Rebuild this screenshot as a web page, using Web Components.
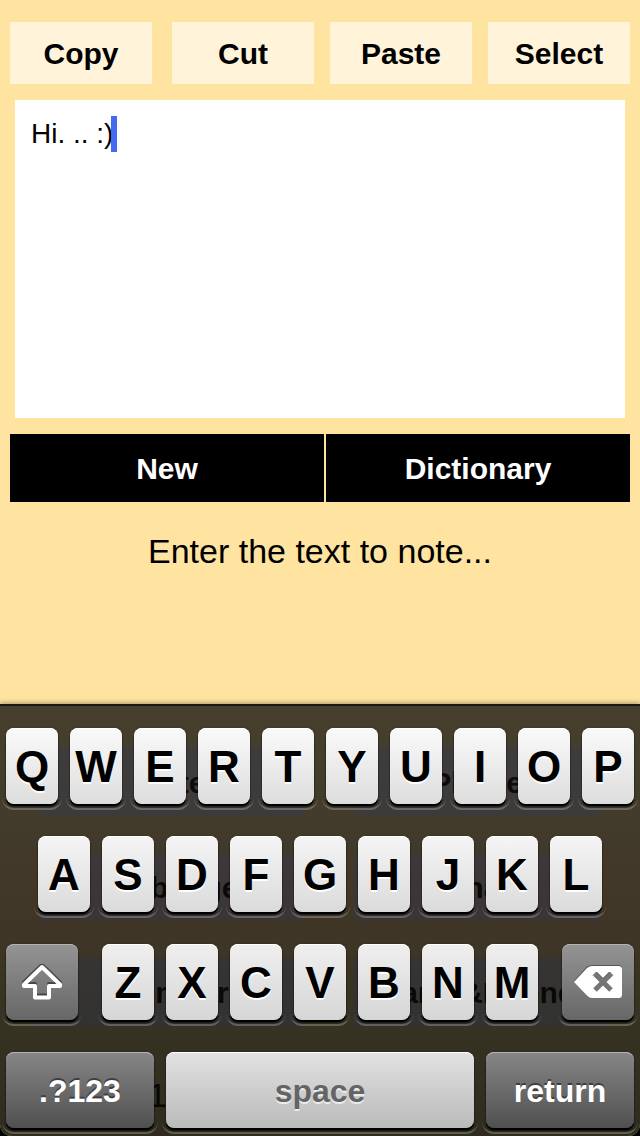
<!DOCTYPE html>
<html lang="en">
<head>
<meta charset="utf-8">
<meta name="viewport" content="width=device-width">
<title>Notes</title>
<style>
  body { margin: 0; background: #000; font-family: "Liberation Sans", Arial, sans-serif; }
</style>
</head>
<body>
<note-app></note-app>

<script>
const define = (name, html) => {
  const template = document.createElement('template');
  template.innerHTML = html;
  customElements.define(name, class extends HTMLElement {
    constructor() {
      super();
      this.attachShadow({ mode: 'open' }).append(template.content.cloneNode(true));
    }
  });
};

/* Flat rectangular button, coloured through custom properties */
define('flat-button', `
  <style>
    :host { display: block; }
    button {
      display: block; width: 100%; height: 100%; margin: 0; padding: 2px 0 0; border: 0;
      background: var(--fill, #fff3da); color: var(--ink, #000);
      font: bold 30px/36px "Liberation Sans", Arial, sans-serif;
    }
  </style>
  <button type="button"><slot></slot></button>`);

define('edit-bar', `
  <style>
    :host { display: grid; grid-template-columns: 1fr 20px 1fr 16px 1fr 16px 1fr; grid-auto-rows: 62px; }
    flat-button:nth-of-type(2) { grid-column: 3; }
    flat-button:nth-of-type(3) { grid-column: 5; }
    flat-button:nth-of-type(4) { grid-column: 7; }
  </style>
  <flat-button>Copy</flat-button>
  <flat-button>Cut</flat-button>
  <flat-button>Paste</flat-button>
  <flat-button>Select</flat-button>`);

define('action-bar', `
  <style>
    :host { display: grid; grid-template-columns: 314fr 304fr; gap: 2px; grid-auto-rows: 68px; }
    flat-button { --fill: #000; --ink: #fff; }
  </style>
  <flat-button>New</flat-button>
  <flat-button>Dictionary</flat-button>`);

define('note-pad', `
  <style>
    :host { display: flex; flex-direction: column; flex: 1; padding: 22px 10px 0; }
    .field { position: relative; margin: 16px 5px; }
    textarea {
      display: block; box-sizing: border-box; width: 100%; height: 318px; margin: 0; padding: 16px;
      border: 0; outline: 0; resize: none; background: #fff; color: #000;
      font: 28px/36px "Liberation Sans", Arial, sans-serif;
    }
    .caret { position: absolute; top: 16px; left: 96px; width: 6px; height: 36px; background: #426bf2; }
    label { padding: 29px 0; text-align: center; font-size: 34px; line-height: 40px; color: #000; }
  </style>
  <edit-bar></edit-bar>
  <div class="field">
    <textarea id="note">Hi. .. :)</textarea>
    <span class="caret"></span>
  </div>
  <action-bar></action-bar>
  <label for="note">Enter the text to note...</label>`);

define('shortcut-grid', `
  <style>
    :host {
      display: grid; grid-template-columns: 264fr 246fr; grid-auto-rows: 68px; gap: 37px 50px;
      align-content: start; padding: 44px 40px 0;
    }
    flat-button { --fill: #e2e2e6; }
    p { margin: 0; padding-left: 108px; font-size: 34px; line-height: 64px; }
  </style>
  <flat-button>Note</flat-button>
  <flat-button>Phone</flat-button>
  <flat-button>Webpage</flat-button>
  <flat-button>Email</flat-button>
  <flat-button>Number</flat-button>
  <flat-button>Name&amp;Phone</flat-button>
  <p>1</p>`);

/* One key: raised face, dark lower edge and a thin lit rim underneath */
define('key-cap', `
  <style>
    :host { display: block; position: relative; isolation: isolate; flex: 1; height: 76px; }
    :host::after {
      content: ""; position: absolute; z-index: -1; left: -4px; right: -4px; bottom: -6px; height: 20px;
      border-bottom: 2px solid rgba(255, 255, 255, .24); border-radius: 0 0 12px 12px;
    }
    button {
      display: flex; align-items: center; justify-content: center;
      width: 100%; height: 100%; margin: 0; padding: 2px 0 0; border: 0; border-radius: 8px;
      background: linear-gradient(var(--top, #fafafa), var(--bottom, #dddddd));
      box-shadow: inset 0 1px 0 var(--edge, #fff), 0 2px 0 #000, 0 3px 2px rgba(0, 0, 0, .6), 0 0 2px rgba(0, 0, 0, .3);
      color: var(--ink, #000); text-shadow: var(--relief, 0 2px 0 #fff);
      font: bold var(--size, 44px)/48px "Liberation Sans", Arial, sans-serif;
    }
  </style>
  <button type="button"><slot></slot></button>`);

define('touch-keyboard', `
  <style>
    :host {
      display: grid; align-content: start; gap: 32px; padding: 22px 6px 8px;
      border-top: 2px solid #1b1914;
      background: linear-gradient(rgba(19, 17, 14, .78), rgba(15, 10, 9, .80) 52%, rgba(10, 11, 7, .82) 76%, rgba(8, 8, 6, .84));
      background-clip: padding-box;
      box-shadow: 0 -1px 5px rgba(0, 0, 0, .35);
    }
    .row { display: flex; gap: 12px; }
    .home { padding: 0 32px; --top: #f5f5f5; --bottom: #dbdbdb; }
    .lower { gap: 24px; --top: #efefef; --bottom: #d6d6d6; }
    .letters { display: flex; gap: 12px; flex: 1; }
    .grey { --top: #949494; --bottom: #676767; --edge: #b4b4b4; --ink: #fff; --relief: 0 -2px 0 #3e3e3e; --size: 32px; }
    .shift { flex: 0 0 72px; }
    .base { --top: #868686; --bottom: #505050; }
    .wide { flex: 148; }
    .space { flex: 308; --top: #e2e2e2; --bottom: #bababa; --ink: #646464; --relief: 0 2px 0 #ececec; --size: 32px; }
    svg { display: block; }
  </style>
  <div class="row">
    <key-cap>Q</key-cap><key-cap>W</key-cap><key-cap>E</key-cap><key-cap>R</key-cap><key-cap>T</key-cap>
    <key-cap>Y</key-cap><key-cap>U</key-cap><key-cap>I</key-cap><key-cap>O</key-cap><key-cap>P</key-cap>
  </div>
  <div class="row home">
    <key-cap>A</key-cap><key-cap>S</key-cap><key-cap>D</key-cap><key-cap>F</key-cap><key-cap>G</key-cap>
    <key-cap>H</key-cap><key-cap>J</key-cap><key-cap>K</key-cap><key-cap>L</key-cap>
  </div>
  <div class="row lower">
    <key-cap class="grey shift">
      <svg width="42" height="38" viewBox="0 0 42 38" role="img" aria-label="Shift" fill="none" stroke-width="4" stroke-linejoin="round">
        <path transform="translate(0 -2)" stroke="#474747" d="M21 3 L3 20.500 V22 H14 V33.500 H28 V22 H39 V20.500 Z"/>
        <path stroke="#fff" d="M21 3 L3 20.500 V22 H14 V33.500 H28 V22 H39 V20.500 Z"/>
      </svg>
    </key-cap>
    <div class="letters">
      <key-cap>Z</key-cap><key-cap>X</key-cap><key-cap>C</key-cap><key-cap>V</key-cap>
      <key-cap>B</key-cap><key-cap>N</key-cap><key-cap>M</key-cap>
    </div>
    <key-cap class="grey shift">
      <svg width="48" height="36" viewBox="0 0 48 36" role="img" aria-label="Delete">
        <path fill="#555" d="M0 16 L13 1.500 Q15.500 0 18 0 H44.500 Q48 0 48 3.500 V29 H13 Z"/>
        <path fill="#fff" d="M0 17 L13 3 Q15.500 1 18 1 H44.500 Q48 1 48 4.500 V29.500 Q48 33 44.500 33 H18 Q15.500 33 13 30.500 Z"/>
        <path fill="none" stroke="#757575" stroke-width="5" d="M21 9 L37 25 M37 9 L21 25"/>
        <path fill="none" stroke="#4c4c4c" stroke-width="1" d="M19 10.500 L22.500 7 L29 13.500 L35.500 7 L39 10.500"/>
      </svg>
    </key-cap>
  </div>
  <div class="row">
    <key-cap class="grey base wide">.?123</key-cap>
    <key-cap class="space">space</key-cap>
    <key-cap class="grey base wide">return</key-cap>
  </div>`);

/* The keyboard shares one grid cell with the shortcuts it covers */
define('note-app', `
  <style>
    :host {
      display: flex; flex-direction: column; min-height: 100vh;
      background: #fee4a0; border-radius: 0 0 12px 12px; overflow: hidden;
    }
    .stack { display: grid; }
    .stack > * { grid-area: 1 / 1; min-width: 0; }
    touch-keyboard { z-index: 1; }
  </style>
  <note-pad></note-pad>
  <div class="stack">
    <shortcut-grid></shortcut-grid>
    <touch-keyboard></touch-keyboard>
  </div>`);
</script>
</body>
</html>
